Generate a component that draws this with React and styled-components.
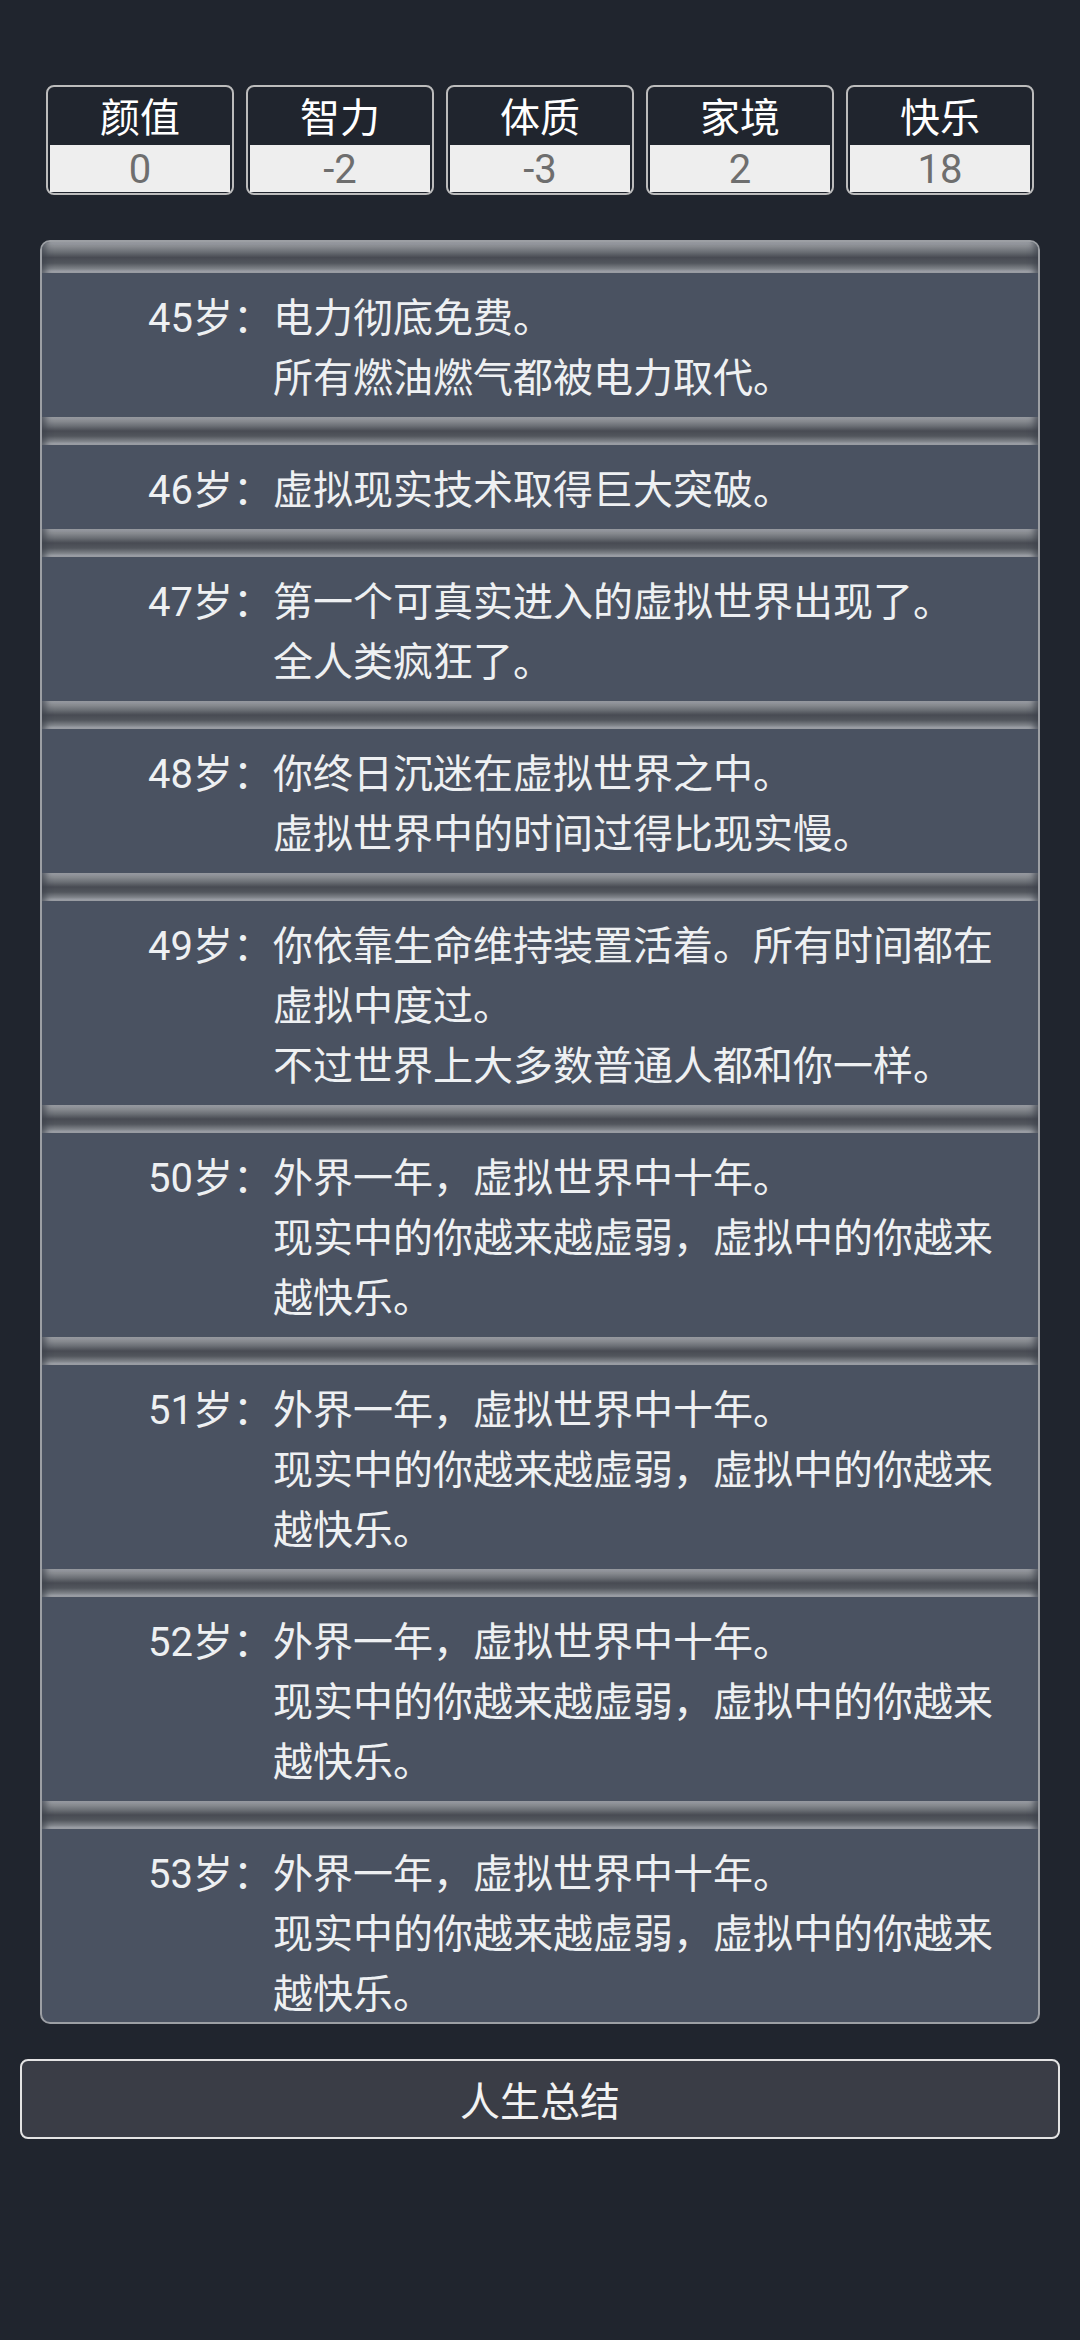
import React from "react";
import styled, { createGlobalStyle } from "styled-components";

const GlobalStyle = createGlobalStyle`
  html, body {
    margin: 0;
    padding: 0;
    background: #20252e;
  }
  body {
    font-family: Roboto, "Noto Sans CJK SC", "Noto Sans", sans-serif;
    color: #eef0f2;
  }
  * { box-sizing: border-box; }
`;

const Page = styled.div`
  min-height: 2340px;
  background: #20252e;
  padding-top: 85px;
  display: flex;
  flex-direction: column;
  align-items: center;
`;

const StatRow = styled.div`
  display: flex;
  gap: 12px;
  justify-content: center;
`;

const StatBox = styled.div`
  width: 188px;
  height: 110px;
  border: 2px solid #bcbcbc;
  border-radius: 8px;
  padding: 0 2px 1px;
  background: #20252e;
  display: flex;
  flex-direction: column;
`;

const StatLabel = styled.div`
  height: 58px;
  line-height: 64px;
  text-align: center;
  font-size: 40px;
  color: #ffffff;
`;

const StatValue = styled.div`
  height: 47px;
  line-height: 49px;
  text-align: center;
  font-size: 40px;
  color: #6e6e6e;
  background: #eeeeee;
`;

const Panel = styled.ul`
  list-style: none;
  margin: 45px 0 0;
  padding: 0;
  width: 1000px;
  height: 1784px;
  border: 2px solid #9c9fa4;
  border-radius: 10px;
  background: #4a5261;
  overflow: hidden;
`;

const Entry = styled.li`
  display: flex;
  flex-direction: column;
`;

const Band = styled.div`
  height: ${(p) => (p.$first ? 31 : 28)}px;
  background: linear-gradient(
    to bottom,
    #a4a7ac 0%,
    #8e9196 11%,
    #6b6f75 32%,
    #484b53 50%,
    #52565d 68%,
    #7d8187 86%,
    #a6a9ae 96%,
    #a6a9ae 100%
  );
  box-shadow: inset 8px 0 6px -4px rgba(60, 65, 75, 0.7),
    inset -8px 0 6px -4px rgba(60, 65, 75, 0.7);
`;

const Row = styled.div`
  display: grid;
  grid-template-columns: 231px 1fr;
  padding: 16px 20px 8px 0;
  font-size: 40px;
  line-height: 60px;
  color: #eef0f2;
`;

const Age = styled.div`
  text-align: right;
  white-space: nowrap;
`;

const Lines = styled.div`
  display: flex;
  flex-direction: column;
`;

const Line = styled.div``;

const SummaryButton = styled.button`
  margin-top: 35px;
  width: 1040px;
  height: 80px;
  border: 2px solid #e4e4e4;
  border-radius: 8px;
  background: #3a3d46;
  color: #f2f2f2;
  font-family: Roboto, "Noto Sans CJK SC", sans-serif;
  font-size: 40px;
  padding: 0;
  cursor: pointer;
`;

const stats = [
  ["颜值", "0"],
  ["智力", "-2"],
  ["体质", "-3"],
  ["家境", "2"],
  ["快乐", "18"],
];

const loop = ["外界一年，虚拟世界中十年。", "现实中的你越来越虚弱，虚拟中的你越来越快乐。"];

const entries = [
  [45, ["电力彻底免费。", "所有燃油燃气都被电力取代。"]],
  [46, ["虚拟现实技术取得巨大突破。"]],
  [47, ["第一个可真实进入的虚拟世界出现了。", "全人类疯狂了。"]],
  [48, ["你终日沉迷在虚拟世界之中。", "虚拟世界中的时间过得比现实慢。"]],
  [49, ["你依靠生命维持装置活着。所有时间都在虚拟中度过。", "不过世界上大多数普通人都和你一样。"]],
  [50, loop],
  [51, loop],
  [52, loop],
  [53, loop],
];

export default function App() {
  return (
    <>
      <GlobalStyle />
      <Page>
        <StatRow>
          {stats.map(([label, value]) => (
            <StatBox key={label}>
              <StatLabel>{label}</StatLabel>
              <StatValue>{value}</StatValue>
            </StatBox>
          ))}
        </StatRow>
        <Panel>
          {entries.map(([age, lines], idx) => (
            <Entry key={age}>
              <Band $first={idx === 0} />
              <Row>
                <Age>{age}岁：</Age>
                <Lines>
                  {lines.map((t, i) => (
                    <Line key={i}>{t}</Line>
                  ))}
                </Lines>
              </Row>
            </Entry>
          ))}
        </Panel>
        <SummaryButton>人生总结</SummaryButton>
      </Page>
    </>
  );
}
